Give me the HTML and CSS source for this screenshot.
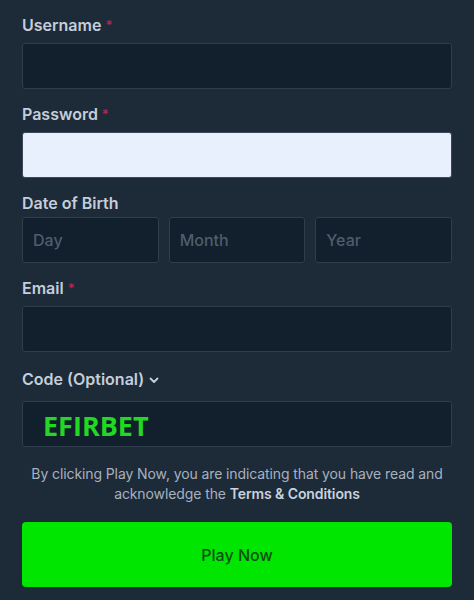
FILE: index.html
```html
<!DOCTYPE html>
<html lang="en">
<head>
<meta charset="utf-8">
<title>Sign up</title>
<link rel="stylesheet" href="styles.css">
</head>
<body>
<form class="form">
  <div class="field">
    <label class="label">Username <span class="req">*</span></label>
    <div class="input"></div>
  </div>
  <div class="field">
    <label class="label">Password <span class="req">*</span></label>
    <div class="input input-filled"></div>
  </div>
  <div class="field">
    <label class="label label-tight">Date of Birth</label>
    <div class="dob">
      <div class="input"><span class="ph">Day</span></div>
      <div class="input"><span class="ph">Month</span></div>
      <div class="input"><span class="ph">Year</span></div>
    </div>
  </div>
  <div class="field field-email">
    <label class="label">Email <span class="req">*</span></label>
    <div class="input"></div>
  </div>
  <div class="field">
    <label class="label label-code">Code (Optional)<svg class="chev" width="10" height="7" viewBox="0 0 10 7"><path d="M1.5 1.5 L5 5 L8.5 1.5" fill="none" stroke="#c6cfdb" stroke-width="1.8" stroke-linecap="round" stroke-linejoin="round"/></svg></label>
    <div class="input"><span class="code">EFIRBET</span></div>
  </div>
  <p class="terms"><span class="terms-line">By clicking Play Now, you are indicating that you have read and</span><span class="terms-line">acknowledge the <b>Terms &amp; Conditions</b></span></p>
  <button type="button" class="play">Play Now</button>
</form>
</body>
</html>
```
FILE: styles.css
```css
html, body {
  margin: 0;
  padding: 0;
  background: #1d2a38;
}
body {
  font-family: Inter, "Liberation Sans", sans-serif;
  height: 600px;
  overflow: hidden;
}
.form {
  padding: 15px 22px 0 22px;
  display: flex;
  flex-direction: column;
}
.field {
  display: flex;
  flex-direction: column;
  margin-bottom: 15px;
}
.field-email { margin-bottom: 17px; }
.label {
  font-size: 16px;
  line-height: 20px;
  font-weight: 600;
  color: #c4cedb;
  margin-bottom: 8px;
  display: flex;
  align-items: center;
  gap: 4px;
}
.label-tight { margin-bottom: 4px; }
.label-code { margin-bottom: 12px; }
.chev { margin-left: 1px; margin-top: 2px; }
.req {
  color: #c3214a;
  font-size: 13px;
}
.input {
  height: 44px;
  box-sizing: content-box;
  border: 1px solid #2f3d4c;
  border-radius: 3px;
  background: #121f2d;
  display: flex;
  align-items: center;
}
.input-filled {
  background: #e8f0fe;
  border-color: #3a4857;
}
.dob {
  display: grid;
  grid-template-columns: 1fr 1fr 1fr;
  gap: 10px;
}
.ph {
  color: #4f5d6c;
  font-size: 16px;
  font-weight: 500;
  padding-left: 10px;
}
.code {
  font-family: "Open Sans", sans-serif;
  font-weight: 700;
  font-size: 27px;
  color: #22d822;
  padding-left: 20px;
  padding-top: 2px;
}
.terms {
  margin: 2px 0 0 0;
  display: flex;
  flex-direction: column;
  align-items: center;
  text-align: center;
  font-size: 14px;
  line-height: 20px;
  letter-spacing: -0.1px;
  color: #a7b1bf;
}
.terms-line { white-space: nowrap; }
.terms b {
  color: #c9d2de;
  font-weight: 600;
}
.play {
  margin-top: 18px;
  height: 65px;
  border: 0;
  border-radius: 4px;
  background: #00e600;
  color: #0b4d16;
  font-family: Inter, "Liberation Sans", sans-serif;
  font-size: 16px;
  font-weight: 500;
}
```
